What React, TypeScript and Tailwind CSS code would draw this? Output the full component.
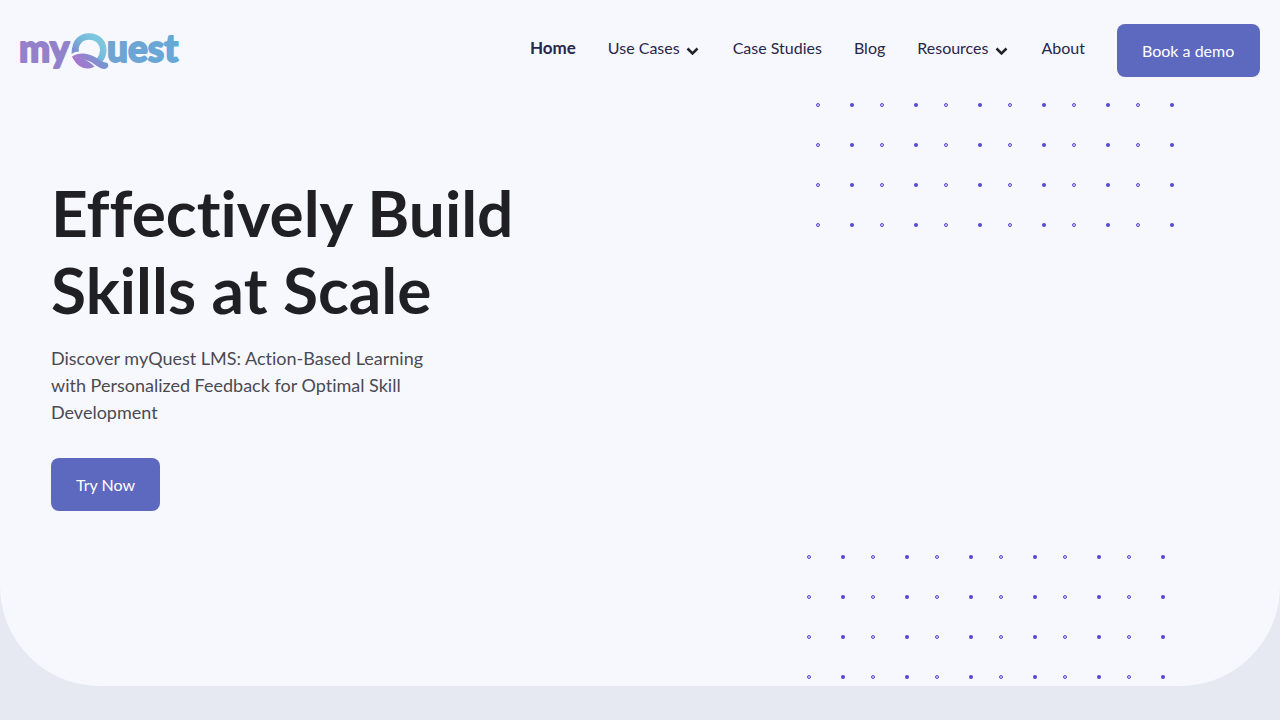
import { clsx } from 'clsx';

const NAV_ITEMS = [
  { label: 'Home', href: '#home', active: true },
  { label: 'Use Cases', href: '#use-cases', menu: true },
  { label: 'Case Studies', href: '#case-studies' },
  { label: 'Blog', href: '#blog' },
  { label: 'Resources', href: '#resources', menu: true },
  { label: 'About', href: '#about' },
];

const DOT_ROWS = [0, 1, 2, 3];
const DOT_COLS = [0, 1, 2, 3, 4, 5];

function Logo() {
  return (
    <svg width="172" height="52" viewBox="-4 -6 172 52" role="img" aria-label="myQuest">
      <defs>
        <linearGradient id="word" gradientUnits="userSpaceOnUse" x1="0" y1="0" x2="160" y2="0">
          <stop offset="0" stopColor="#9580ca" />
          <stop offset="0.3" stopColor="#9182ca" />
          <stop offset="0.55" stopColor="#6fa3d4" />
          <stop offset="1" stopColor="#66a9d6" />
        </linearGradient>
        <linearGradient id="ring" gradientUnits="userSpaceOnUse" x1="54" y1="22" x2="72" y2="4">
          <stop offset="0" stopColor="#7b8fd2" />
          <stop offset="0.6" stopColor="#76b9dc" />
          <stop offset="1" stopColor="#7cc7dd" />
        </linearGradient>
        <linearGradient id="leaf" gradientUnits="userSpaceOnUse" x1="60" y1="38" x2="80" y2="24">
          <stop offset="0" stopColor="#a974cd" />
          <stop offset="1" stopColor="#7598d2" />
        </linearGradient>
      </defs>
      <g
        fill="url(#word)"
        stroke="url(#word)"
        strokeWidth="1.8"
        strokeLinejoin="round"
        fontFamily="Lato, sans-serif"
        fontWeight="900"
        fontSize="37"
      >
        <text x="-1" y="31">my</text>
        <text x="87" y="31">uest</text>
      </g>
      <path
        d="M55.300 20 C55.300 11 61 5.500 69 5.500 C77.500 5.500 83.300 11.500 83.300 19 C83.300 23.500 81.500 27 79 30"
        fill="none"
        stroke="url(#ring)"
        strokeWidth="6.500"
      />
      <path d="M52 17 L58.500 18.500 L59 20.500 C56.500 20.500 54 21.300 51.500 23 Z" fill="#7b91d2" />
      <path
        d="M51.800 25.500 C58 21.500 66 21.500 73 25 C78 27.500 82 31 86 31.500 C90 32.500 88.500 38 84 38 C79.500 38 76.500 34 70 30.500 C65 28 58 27 51.800 25.500 Z"
        fill="url(#leaf)"
      />
      <path
        d="M52 25.500 C60 26.500 67 28 74.500 35.500 C66 41 56 35 52 25.500 Z"
        fill="url(#leaf)"
      />
    </svg>
  );
}

function Chevron() {
  return (
    <svg width="15" height="8" viewBox="0 0 15 8" aria-hidden="true" className="mt-1.5">
      <path d="M1.500 1.500 L6.500 6.500 L11.500 1.500" fill="none" stroke="#222228" strokeWidth="2.500" />
    </svg>
  );
}

function DotGrid({ className }: { className: string }) {
  return (
    <svg
      width="358"
      height="124"
      viewBox="0 0 358 124"
      aria-hidden="true"
      className={clsx('pointer-events-none absolute', className)}
    >
      {DOT_ROWS.map((row) =>
        DOT_COLS.map((col) => (
          <g key={`${row}-${col}`}>
            <circle cx={2 + col * 64} cy={2 + row * 40} r="1.500" fill="#dcd8f7" stroke="#5746d0" />
            <circle cx={36 + col * 64} cy={2 + row * 40} r="2" fill="#5746d0" />
          </g>
        )),
      )}
    </svg>
  );
}

function Header() {
  return (
    <header className="relative z-10 flex items-center justify-between px-5 py-6">
      <a href="#home" className="-ml-1">
        <Logo />
      </a>
      <nav className="flex items-start gap-8 text-[#27274a]">
        {NAV_ITEMS.map((item) => (
          <a
            key={item.label}
            href={item.href}
            className={clsx(
              'flex items-center gap-1.5 py-3 leading-6 whitespace-nowrap',
              item.active ? 'text-[17px] font-bold' : 'text-base',
            )}
          >
            {item.label}
            {item.menu && <Chevron />}
          </a>
        ))}
        <button
          type="button"
          className="h-[53px] w-[143px] rounded-lg bg-[#5d68bf] pl-[25px] text-left text-base whitespace-nowrap text-white"
        >
          Book a demo
        </button>
      </nav>
    </header>
  );
}

function Hero() {
  return (
    <main className="px-[51px] pt-[73px] pb-[175px]">
      <h1 className="max-w-[520px] text-[64px] leading-[77px] font-bold text-[#1f1f24]">
        Effectively Build Skills at Scale
      </h1>
      <p className="mt-[17px] max-w-[400px] text-lg leading-[27px] text-[#4a4a52]">
        Discover myQuest LMS: Action-Based Learning with Personalized Feedback for Optimal Skill
        Development
      </p>
      <button
        type="button"
        className="mt-8 h-[53px] rounded-lg bg-[#5d68bf] px-[25px] text-base text-white"
      >
        Try Now
      </button>
    </main>
  );
}

export default function App() {
  return (
    <div className="min-h-screen bg-[#e6e9f1] font-['Lato',sans-serif] [font-variant-ligatures:none]">
      <div className="relative rounded-b-[100px] bg-[#f7f8fe]">
        <DotGrid className="top-[103px] right-[106px]" />
        <DotGrid className="right-[115px] bottom-[7px]" />
        <Header />
        <Hero />
      </div>
    </div>
  );
}
